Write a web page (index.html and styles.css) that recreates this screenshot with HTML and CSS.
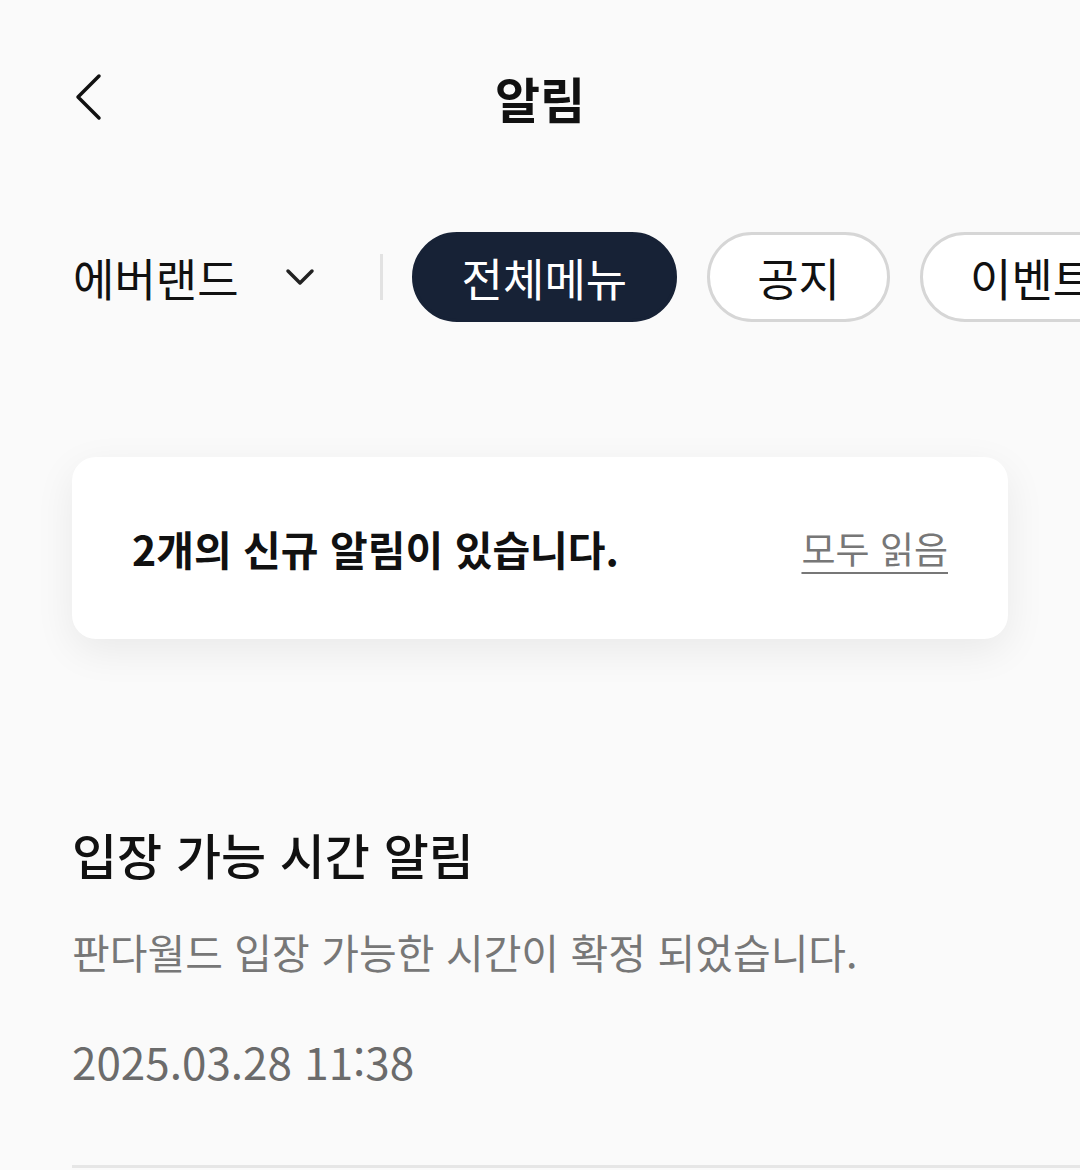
FILE: index.html
```html
<!DOCTYPE html>
<html lang="ko">
<head>
    <meta charset="UTF-8">
    <meta name="viewport" content="width=device-width, initial-scale=1.0">
    <title>알림</title>
    <link rel="stylesheet" href="styles.css">
</head>
<body>
    <!-- Header -->
    <header class="header">
        <a class="back-btn" href="#" aria-label="뒤로">
            <svg width="30" height="48" viewBox="0 0 30 48">
                <path d="M26 3 L5 24 L26 45" fill="none" stroke="#111" stroke-width="3.5" stroke-linecap="round" stroke-linejoin="round"/>
            </svg>
        </a>
        <h1 class="title">알림</h1>
        <span></span>
    </header>

    <!-- Filter Row -->
    <nav class="filters">
        <div class="brand">
            <span>에버랜드</span>
            <svg width="30" height="20" viewBox="0 0 30 20">
                <path d="M3 4 L15 16 L27 4" fill="none" stroke="#222" stroke-width="3.5" stroke-linecap="round" stroke-linejoin="round"/>
            </svg>
        </div>
        <span class="divider"></span>
        <button class="pill active">전체메뉴</button>
        <button class="pill">공지</button>
        <button class="pill">이벤트</button>
    </nav>

    <!-- New Notice Summary -->
    <section class="summary">
        <p class="summary-text">2개의 신규 알림이 있습니다.</p>
        <a class="read-all" href="#">모두 읽음</a>
    </section>

    <!-- Notice List -->
    <ul class="notice-list">
        <li class="notice">
            <h3 class="notice-title">입장 가능 시간 알림</h3>
            <p class="notice-body">판다월드 입장 가능한 시간이 확정 되었습니다.</p>
            <p class="notice-date">2025.03.28 11:38</p>
        </li>
    </ul>
</body>
</html>
```
FILE: styles.css
```css
/* General Page Styling */
html, body {
    margin: 0;
    padding: 0;
    background-color: #fafafa;
    font-family: "Noto Sans CJK KR", "Noto Sans", sans-serif;
    color: #111;
    overflow-x: hidden;
}

/* Header */
.header {
    height: 194px;
    display: grid;
    grid-template-columns: 1fr auto 1fr;
    align-items: center;
    padding: 0 73px;
}

.back-btn {
    display: flex;
    align-items: center;
}

.title {
    margin: 0;
    font-size: 49px;
    font-weight: 700;
    line-height: 1;
}

/* Filter Row */
.filters {
    margin-top: 38px;
    height: 90px;
    display: flex;
    align-items: center;
    padding-left: 73px;
    white-space: nowrap;
    overflow: hidden;
}

.brand {
    display: flex;
    align-items: center;
    gap: 46px;
    font-size: 45px;
    flex-shrink: 0;
}

.divider {
    width: 3px;
    height: 46px;
    background-color: #e2e2e2;
    margin: 0 29px 0 65px;
    flex-shrink: 0;
}

.pill {
    flex-shrink: 0;
    height: 90px;
    padding: 0 47px;
    margin-right: 30px;
    border: 3px solid #d6d6d6;
    border-radius: 45px;
    background-color: #fff;
    font-family: inherit;
    font-size: 45px;
    color: #111;
}

    .pill.active {
        background-color: #172236;
        border-color: #172236;
        color: #fff;
    }

/* Summary Card */
.summary {
    margin: 135px 72px 0;
    height: 182px;
    padding: 0 60px;
    display: flex;
    align-items: center;
    justify-content: space-between;
    background-color: #fff;
    border-radius: 24px;
    box-shadow: 0 12px 40px rgba(0, 0, 0, 0.07);
}

.summary-text {
    margin: 0;
    font-size: 41px;
    font-weight: 700;
}

.read-all {
    font-size: 37px;
    color: #777;
    text-decoration: underline;
    text-underline-offset: 8px;
    text-decoration-thickness: 2px;
}

/* Notice List */
.notice-list {
    list-style: none;
    margin: 184px 0 0 72px;
    padding: 0;
}

.notice {
    padding-bottom: 78px;
    border-bottom: 3px solid #e6e6e6;
}

.notice-title {
    margin: 0;
    font-size: 49px;
    font-weight: 500;
    line-height: 62px;
}

.notice-body {
    margin: 40px 0 0;
    font-size: 41px;
    line-height: 52px;
    color: #777;
}

.notice-date {
    margin: 58px 0 0;
    font-size: 44px;
    line-height: 52px;
    color: #6b6b6b;
}
```
